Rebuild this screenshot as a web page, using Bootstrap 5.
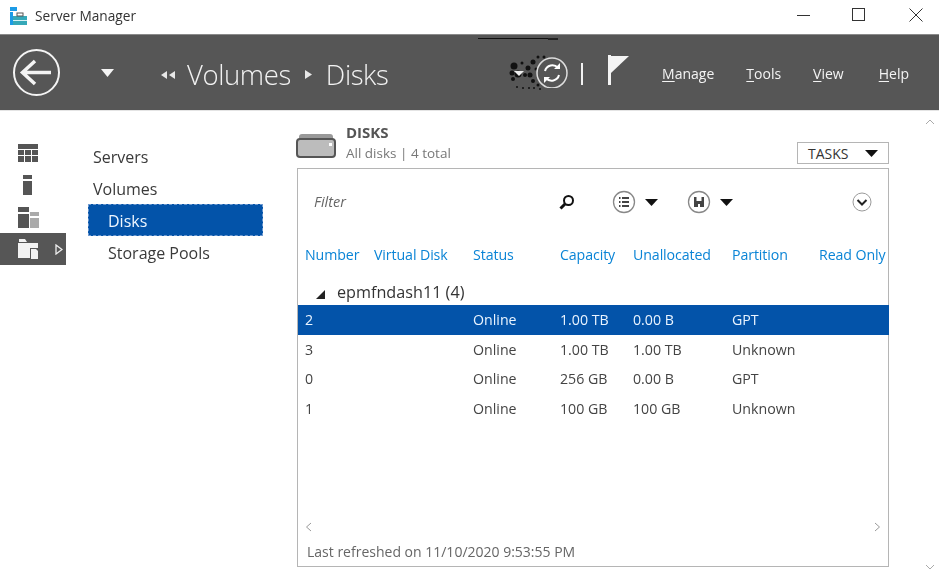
<!DOCTYPE html>
<html lang="en"><head><meta charset="utf-8"><title>Server Manager</title>
<link href="https://cdn.jsdelivr.net/npm/bootstrap@5.3.0/dist/css/bootstrap.min.css" rel="stylesheet">
<style>
html,body{height:575px;overflow:hidden}
body{width:939px;background:#fff;font-family:"Open Sans","Noto Sans",sans-serif;color:#333;font-size:14px;filter:blur(.45px)}
.titlebar{height:34px;padding-left:9px;padding-bottom:3px}
.titlebar .appname{font-size:13.7px;margin-left:8px;color:#333;line-height:20px}
.winctl{margin-left:auto;margin-right:-5px;padding-bottom:1px}
.winctl svg{display:block}
.winslot{width:56.5px;display:flex;justify-content:center}
.headbar{height:77px;background:#565656;border-top:1px solid #8a8a8a;border-bottom:1px solid #e4e4e4;color:#fff;padding-left:13px}
.backbtn{margin-right:41px}
.crumbs{font-size:27.5px;font-weight:300;letter-spacing:-.4px;color:#f2f2f2;margin-left:46px;padding-top:4px}
.crumbs .crumbv{margin:0 14px 0 11px}
.crumbs .crumbd{margin-left:14px}
.toolset{margin-left:auto;padding-right:30px;padding-top:2px}
.syncwrap{position:relative;width:38px;height:38px;margin-right:8px;margin-top:-2px}
.speck{position:absolute;left:-26px;top:0}
.topline{position:absolute;left:-57px;top:-16px;width:80px;height:1px;background:#111}
.topend{position:absolute;left:13px;top:-16px;width:10px;height:2px;background:#222}
.divider{width:2px;height:22px;background:#f2f2f2;margin-right:25px}
.flagmark{margin-right:33px;margin-top:-8px}
.menuitem{font-size:14px;color:#f4f4f4;margin-right:32px;text-decoration:none}
.menuitem.wider{margin-right:35px}
.menuitem:last-child{margin-right:0}
.menuitem u{text-underline-offset:2px}
.bodyzone{height:463px}
.rail{width:66px;padding-top:26px;flex:none}
.railitem{height:32px;display:flex;align-items:center;padding-left:18px;gap:12px}
.railitem.active{background:#565656}
.sidenav{width:175px;margin-left:22px;padding-top:29px;flex:none;font-size:16px;color:#3a3a3a}
.navrow{height:32px;display:flex;align-items:center;padding-left:5px;padding-top:2px}
.navrow.sub{padding-left:20px}
.navrow.sel{background:#0353a9;color:#eef6ff;outline:1px dashed #6f9ad0;outline-offset:-1px}
.mainpane{width:593px;margin-left:33px;flex:none;padding-top:12px}
.panehead{height:45px;position:relative;padding-left:0}
.diskglyph{margin-top:10px;flex:none}
.panetitle{font-weight:700;font-size:15px;color:#555;line-height:19px}
.panesub{font-size:13.5px;color:#777;line-height:23px}
.panetext{margin-left:10px;margin-top:0}
.tasksbtn{position:absolute;right:0;bottom:4px;width:92px;height:22px;border:1px solid #b5b5b5;border-radius:0;padding:0 10px;background:#fff;color:#333;font-size:14px;display:flex;align-items:center;justify-content:space-between}
.diskbox{height:399px;margin-left:1px;border:1px solid #b5b5b5;display:flex;flex-direction:column;position:relative}
.filterrow{height:66px;padding-left:16px}
.filtertext{font-style:italic;color:#666;font-size:14.5px;width:245px}
.glassicon{margin-right:37px}
.ctrl{display:flex;align-items:center;gap:9px}
.ctrl.first{margin-right:29px}
.chevbtn{margin-left:auto;margin-right:16px}
.disktable{table-layout:fixed;width:591px;margin:0;font-size:14.2px;border-collapse:collapse}
.disktable th,.disktable td{padding:0 0 0 7px;border:0;background:transparent;color:#444;font-weight:400;white-space:nowrap;overflow:hidden;vertical-align:middle;box-shadow:none}
.disktable thead th{color:#0a84d6;height:40px;font-size:14.2px;letter-spacing:-.1px}
.disktable .grouprow td{height:30px;font-size:16.2px;color:#333;padding:5px 0 0 18px}
.disktable tbody tr.rw td{height:29.6px}
.disktable tr.picked td{background:#0353a9;color:#eaf4ff}
.tri{display:inline-block;margin-right:12px}
.scrollhint{margin-top:auto;height:26px;padding:0 7px;display:flex;justify-content:space-between;align-items:center}
.refreshed{height:26px;padding-left:9px;font-size:14px;color:#666;line-height:24px}
.pagescroll{flex:none;margin-left:auto;width:19px;position:relative}
.pagescroll svg{position:absolute;left:5px}
</style></head>
<body>
<div class="titlebar d-flex align-items-center">
  <svg width="18" height="18" viewBox="0 0 18 18"><rect x="1" y="0" width="7" height="4" fill="#1c9be6"/><rect x="1" y="5" width="3" height="13" fill="#1c9be6"/><rect x="4" y="9" width="14" height="9" fill="#35a8b8"/><rect x="8" y="6" width="6" height="3" fill="none" stroke="#555" stroke-width="1"/><rect x="4" y="13" width="14" height="1" fill="#d8f2f5"/></svg>
  <span class="appname">Server Manager</span>
  <div class="winctl d-flex align-items-center">
    <div class="winslot"><svg width="14" height="14"><path d="M1 7.500H14" stroke="#333" stroke-width="1"/></svg></div>
    <div class="winslot"><svg width="14" height="14"><rect x=".5" y=".5" width="12" height="12" fill="none" stroke="#333"/></svg></div>
    <div class="winslot"><svg width="14" height="14"><path d="M.5.5 13.500 13.500M13.500.5.5 13.500" stroke="#333"/></svg></div>
  </div>
</div>
<div class="headbar d-flex align-items-center">
  <svg class="backbtn" width="47" height="47" viewBox="0 0 47 47"><circle cx="23.500" cy="23.500" r="22.500" fill="none" stroke="#f4f4f4" stroke-width="2"/><path d="M9 23.500H38M22 12 9.500 23.500 22 35" fill="none" stroke="#f4f4f4" stroke-width="3.500"/></svg>
  <svg width="13" height="8" viewBox="0 0 13 8"><path d="M0 0H13L6.500 8Z" fill="#f4f4f4"/></svg>
  <div class="crumbs d-flex align-items-center">
    <svg width="16" height="8" viewBox="0 0 16 8"><path d="M7 0V8L1 4ZM15 0V8L9 4Z" fill="#e8e8e8"/></svg>
    <span class="crumbv">Volumes</span>
    <svg width="7" height="9" viewBox="0 0 7 9"><path d="M0 0V9L7 4.500Z" fill="#e8e8e8"/></svg>
    <span class="crumbd">Disks</span>
  </div>
  <div class="toolset d-flex align-items-center">
    <div class="syncwrap">
      <div class="topline"></div><div class="topend"></div>
      <svg class="speck" width="52" height="38" viewBox="0 0 52 38"><g fill="#111"><circle cx="5" cy="12" r="3.500"/><circle cx="9" cy="20" r="3.500"/><circle cx="3" cy="19" r="2.500"/><circle cx="19" cy="14" r="2.500"/><circle cx="24" cy="8" r="2.500"/><circle cx="21" cy="21" r="2.500"/><circle cx="16" cy="21" r="2"/><circle cx="29" cy="3" r="1.500"/><circle cx="35" cy="3" r="1.500"/><circle cx="4" cy="25" r="2"/><circle cx="13" cy="9" r="1.500"/><circle cx="24" cy="27" r="2"/><circle cx="29" cy="31" r="1.500"/><circle cx="8" cy="33" r="1"/><circle cx="14" cy="34" r="1"/><circle cx="20" cy="34" r="1"/><circle cx="25" cy="34" r="1"/><circle cx="31" cy="35" r="1"/><circle cx="38" cy="33" r="1"/><circle cx="27" cy="15" r="1.500"/></g><path d="M5 17H15L10 22Z" fill="#eee"/></svg>
      <svg class="position-relative" width="34" height="34" viewBox="0 0 34 34"><circle cx="17" cy="19" r="15" fill="none" stroke="#ddd" stroke-width="1.500"/><path d="M10 17a7.500 7.500 0 0 1 13-3M24 21a7.500 7.500 0 0 1-13 3" fill="none" stroke="#fff" stroke-width="2"/><path d="M25 9v6h-6ZM9 29v-6h6Z" fill="#fff"/></svg>
    </div>
    <div class="divider"></div>
    <svg class="flagmark" width="21" height="30" viewBox="0 0 21 30"><path d="M0 0H3V30H0Z" fill="#f4f4f4"/><path d="M3 1H21L3 18Z" fill="#f4f4f4"/></svg>
    <a class="menuitem" href="#"><u>M</u>anage</a>
    <a class="menuitem" href="#"><u>T</u>ools</a>
    <a class="menuitem wider" href="#"><u>V</u>iew</a>
    <a class="menuitem" href="#"><u>H</u>elp</a>
  </div>
</div>
<div class="bodyzone d-flex">
  <div class="rail">
    <div class="railitem"><svg width="20" height="19" viewBox="0 0 20 19"><path d="M0 0H20V5H0ZM0 6H6V11H0ZM7 6H13V11H7ZM14 6H20V11H14ZM0 12H6V18H0ZM7 12H13V18H7ZM14 12H20V18H14Z" fill="#555"/></svg></div>
    <div class="railitem"><svg width="20" height="20" viewBox="0 0 20 20"><path d="M5 0H14V4H5ZM5 6H14V20H5Z" fill="#555"/></svg></div>
    <div class="railitem"><svg width="21" height="21" viewBox="0 0 21 21"><path d="M0 0H11V5H0ZM0 7H11V21H0Z" fill="#555"/><path d="M12 5H21V9H12ZM12 11H21V21H12Z" fill="#aaa"/></svg></div>
    <div class="railitem active"><svg width="21" height="20" viewBox="0 0 21 20"><path d="M1 0H7L9 3H1ZM0 4H20V9H12V19H0Z" fill="#f2f2f2"/><path d="M13 10H18L20 12V20H13Z" fill="#f2f2f2"/></svg><svg class="ms-1" width="8" height="11" viewBox="0 0 8 11"><path d="M1 1V10L7 5.500Z" fill="none" stroke="#eee" stroke-width="1.300"/></svg></div>
  </div>
  <div class="sidenav">
    <div class="navrow">Servers</div>
    <div class="navrow">Volumes</div>
    <div class="navrow sub sel">Disks</div>
    <div class="navrow sub">Storage Pools</div>
  </div>
  <div class="mainpane">
    <div class="panehead d-flex">
      <svg class="diskglyph" width="40" height="25" viewBox="0 0 40 25"><path d="M3 4Q3 1 6 1H34Q37 1 37 4V6H3Z" fill="#999"/><rect x="1" y="6" width="38" height="18" rx="3" fill="#bcbcbc" stroke="#555" stroke-width="2"/><rect x="33" y="10" width="3" height="3" fill="#fff"/></svg>
      <div class="panetext"><div class="panetitle">DISKS</div><div class="panesub">All disks | 4 total</div></div>
      <button class="tasksbtn" type="button"><span>TASKS</span><svg width="13" height="7" viewBox="0 0 13 7"><path d="M0 0H13L6.500 7Z" fill="#111"/></svg></button>
    </div>
    <div class="diskbox">
      <div class="filterrow d-flex align-items-center">
        <span class="filtertext">Filter</span>
        <svg class="glassicon" width="16" height="16" viewBox="0 0 16 16"><circle cx="9.500" cy="6.500" r="4.500" fill="none" stroke="#111" stroke-width="2"/><path d="M6 10 1.500 14.500" stroke="#111" stroke-width="3"/></svg>
        <div class="ctrl first">
          <svg width="24" height="24" viewBox="0 0 24 24"><circle cx="12" cy="12" r="10.500" fill="#fff" stroke="#888" stroke-width="1.300"/><path d="M10 8H17M10 12H17M10 16H17M7 8H8.500M7 12H8.500M7 16H8.500" stroke="#444" stroke-width="1.800"/></svg>
          <svg width="13" height="7" viewBox="0 0 13 7"><path d="M0 0H13L6.500 7Z" fill="#111"/></svg>
        </div>
        <div class="ctrl">
          <svg width="24" height="24" viewBox="0 0 24 24"><circle cx="12" cy="12" r="10.500" fill="#fff" stroke="#888" stroke-width="1.300"/><path d="M7 7H17V17H7Z" fill="#444"/><path d="M9.500 7H14.500V11H9.500ZM11 14H13V17H11Z" fill="#fff"/></svg>
          <svg width="13" height="7" viewBox="0 0 13 7"><path d="M0 0H13L6.500 7Z" fill="#111"/></svg>
        </div>
        <svg class="chevbtn" width="20" height="20" viewBox="0 0 20 20"><circle cx="10" cy="10" r="9" fill="#fff" stroke="#999"/><path d="M5.500 8 10 12.500 14.500 8" fill="none" stroke="#222" stroke-width="2"/></svg>
      </div>
      <table class="table disktable">
        <colgroup><col style="width:69px"><col style="width:99px"><col style="width:87px"><col style="width:73px"><col style="width:99px"><col style="width:87px"><col style="width:77px"></colgroup>
        <thead><tr><th>Number</th><th>Virtual Disk</th><th>Status</th><th>Capacity</th><th>Unallocated</th><th>Partition</th><th>Read Only</th></tr></thead>
        <tbody>
          <tr class="grouprow"><td colspan="7"><svg class="tri" width="9" height="9" viewBox="0 0 9 9"><path d="M9 0V9H0Z" fill="#222"/></svg>epmfndash11 (4)</td></tr>
          <tr class="rw picked"><td>2</td><td></td><td>Online</td><td>1.00 TB</td><td>0.00 B</td><td>GPT</td><td></td></tr>
          <tr class="rw"><td>3</td><td></td><td>Online</td><td>1.00 TB</td><td>1.00 TB</td><td>Unknown</td><td></td></tr>
          <tr class="rw"><td>0</td><td></td><td>Online</td><td>256 GB</td><td>0.00 B</td><td>GPT</td><td></td></tr>
          <tr class="rw"><td>1</td><td></td><td>Online</td><td>100 GB</td><td>100 GB</td><td>Unknown</td><td></td></tr>
        </tbody>
      </table>
      <div class="scrollhint"><svg width="7" height="10" viewBox="0 0 7 10"><path d="M6 1 1.500 5 6 9" fill="none" stroke="#999"/></svg><svg width="7" height="10" viewBox="0 0 7 10"><path d="M1 1 5.500 5 1 9" fill="none" stroke="#999"/></svg></div>
      <div class="refreshed">Last refreshed on 11/10/2020 9:53:55 PM</div>
    </div>
  </div>
  <div class="pagescroll"><svg style="top:8px" width="10" height="6" viewBox="0 0 10 6"><path d="M1 5 5 1 9 5" fill="none" stroke="#aaa"/></svg><svg style="top:453px" width="10" height="6" viewBox="0 0 10 6"><path d="M1 1 5 5 9 1" fill="none" stroke="#aaa"/></svg></div>
</div>
</body></html>
